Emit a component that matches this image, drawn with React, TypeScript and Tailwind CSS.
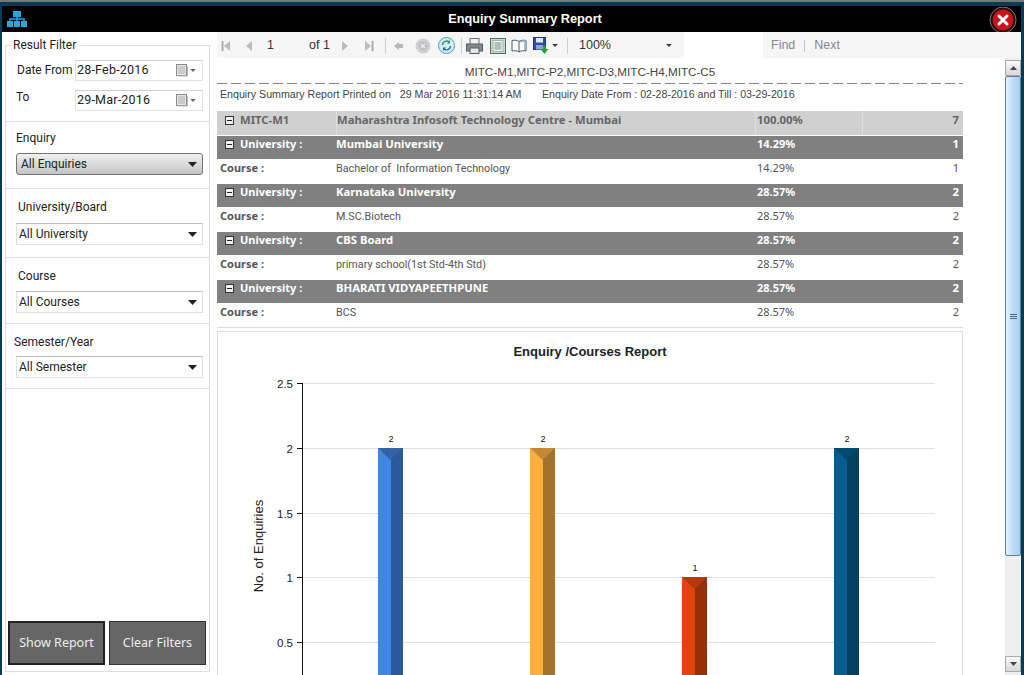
import type { ReactNode } from 'react'

const ui = "font-['Noto_Sans',sans-serif]"
const tight = "font-['Roboto',sans-serif]"
const arial = "font-['Liberation_Sans',sans-serif]"

function Caret({ color = '#222', small }: { color?: string; small?: boolean }) {
  return (
    <svg width={small ? 6 : 9} height={small ? 3 : 5} viewBox="0 0 9 5" className="shrink-0">
      <path d="M0 0h9L4.500 5z" fill={color} />
    </svg>
  )
}

function DateField({ value }: { value: string }) {
  return (
    <div className={`${tight} flex h-[21px] w-[128px] items-center border border-[#e2e2e2] border-t-[#cfcfcf] bg-white pl-[1px] pr-[6px] text-[12.500px] tracking-[0.2px] text-[#222]`}>
      <span className="flex-1">{value}</span>
      <svg width="12" height="13" viewBox="0 0 12 13" className="mr-[2px]">
        <rect x="0.500" y="0.500" width="10" height="11" fill="#e4e4e4" stroke="#8a8a8a" />
        <path d="M2 3h7M2 5h7M2 7h7M2 9h7" stroke="#b0b0b0" />
        <path d="M11.500 2v10H2" fill="none" stroke="#bbb" />
      </svg>
      <Caret color="#666" small />
    </div>
  )
}

function Select({ value, active }: { value: string; active?: boolean }) {
  return (
    <div
      className={
        active
          ? `${tight} flex h-[22px] w-[187px] items-center justify-between rounded-[3px] border border-[#777] bg-gradient-to-b from-[#f0f0f0] to-[#c4c4c4] pl-[4px] pr-[5px] text-[12px] text-[#222]`
          : `${tight} flex h-[22px] w-[187px] items-center justify-between border border-[#e0e0e0] border-t-[#bdbdbd] bg-white pl-[2px] pr-[5px] text-[12px] text-[#222]`
      }
    >
      <span>{value}</span>
      <Caret />
    </div>
  )
}

function FilterBlock(props: { label: string; value: string; active?: boolean; labelClass: string; height: string }) {
  return (
    <div className={`${props.height} border-b border-[#dcdcdc]`}>
      <div className={`${props.labelClass} ${tight} text-[12px] leading-[16px] text-[#222]`}>{props.label}</div>
      <div className="ml-[10px]">
        <Select value={props.value} active={props.active} />
      </div>
    </div>
  )
}

function Sidebar() {
  return (
    <aside className={`${ui} w-[215px] shrink-0 pl-[3px] pr-[2px]`}>
      <fieldset className="mt-[5px] h-[635px] w-[205px] border border-[#dedede] bg-white">
        <legend className={`${tight} ml-[5px] px-[2px] text-[12px] leading-[16px] text-[#222]`}>Result Filter</legend>
        <div className="h-[69px] border-b border-[#dcdcdc] pt-[7px]">
          <div className="flex items-start">
            <span className={`${tight} ml-[11px] w-[58px] whitespace-nowrap pt-[1px] text-[12px] leading-[18px] text-[#222]`}>Date From</span>
            <DateField value="28-Feb-2016" />
          </div>
          <div className="mt-[9px] flex items-start">
            <span className={`${tight} ml-[10px] w-[59px] text-[12px] leading-[14px] text-[#222]`}>To</span>
            <DateField value="29-Mar-2016" />
          </div>
        </div>
        <FilterBlock label="Enquiry" value="All Enquiries" active labelClass="ml-[10px] pt-[8px] pb-[7px]" height="h-[67px]" />
        <FilterBlock label="University/Board" value="All University" labelClass="ml-[12px] pt-[10px] pb-[8px]" height="h-[69px]" />
        <FilterBlock label="Course" value="All Courses" labelClass="ml-[12px] pt-[10px] pb-[7px]" height="h-[66px]" />
        <FilterBlock label="Semester/Year" value="All Semester" labelClass="ml-[8px] pt-[10px] pb-[6px]" height="h-[65px]" />
        <div className="mt-[232px] flex gap-[4px] pl-[2px]">
          <button className="h-[44px] w-[97px] border-2 border-[#222] bg-[#666] text-[12.500px] text-[#eee]">Show Report</button>
          <button className="h-[44px] w-[97px] border border-[#333] bg-[#666] text-[12.500px] text-[#eee]">Clear Filters</button>
        </div>
      </fieldset>
    </aside>
  )
}

function Tool({ w, children }: { w: string; children?: ReactNode }) {
  return <div className={`${w} flex shrink-0 items-center justify-center`}>{children}</div>
}

function Sep() {
  return <div className="h-[16px] w-px shrink-0 bg-[#cfcfcf]" />
}

function Nav({ dir, bar }: { dir: 'l' | 'r'; bar?: boolean }) {
  return (
    <svg width="12" height="12" viewBox="0 0 12 12">
      <path d={dir === 'l' ? 'M9 1v10L3 6z' : 'M3 1v10l6-5z'} fill="#b9bcc0" />
      {bar && <rect x={dir === 'l' ? 0.500 : 9.500} y="1" width="2" height="10" fill="#a8abaf" />}
    </svg>
  )
}

function Toolbar() {
  return (
    <div className={`${arial} flex h-[26px] items-center bg-[#f5f5f5] pl-[2px] pt-[1px] text-[12.500px] text-[#333]`}>
      <Tool w="w-[16px]"><Nav dir="l" bar /></Tool>
      <Tool w="w-[28px]"><Nav dir="l" /></Tool>
      <span className="w-[46px] pl-[4px]">1</span>
      <span className="w-[26px] whitespace-nowrap">of 1</span>
      <Tool w="w-[20px]"><Nav dir="r" /></Tool>
      <Tool w="w-[26px]"><Nav dir="r" bar /></Tool>
      <div className="w-[4px]" />
      <Sep />
      <Tool w="w-[25px]">
        <svg width="10" height="10" viewBox="0 0 10 10"><path d="M5 1v2h4v4H5v2L0 5z" fill="#b4b9be" /></svg>
      </Tool>
      <Tool w="w-[23px]">
        <svg width="16" height="16" viewBox="0 0 16 16">
          <circle cx="8" cy="8" r="7.500" fill="#d0d1d3" />
          <circle cx="8" cy="8" r="4.500" fill="#bdbfc2" />
          <path d="M6 6l4 4m0-4l-4 4" stroke="#eee" strokeWidth="1.400" />
        </svg>
      </Tool>
      <Tool w="w-[24px]">
        <svg width="17" height="17" viewBox="0 0 17 17">
          <circle cx="8.500" cy="8.500" r="8" fill="#d5ecf6" stroke="#4a9cc2" />
          <path d="M4.500 8a4 4 0 0 1 7-2.500" fill="none" stroke="#2f9a4a" strokeWidth="1.500" />
          <path d="M12.500 9a4 4 0 0 1-7 2.500" fill="none" stroke="#2f7fb0" strokeWidth="1.500" />
          <path d="M12 3v3.400H8.800z" fill="#2f9a4a" />
          <path d="M5 14v-3.400h3.200z" fill="#1f6fa0" />
        </svg>
      </Tool>
      <div className="w-[3px]" />
      <Sep />
      <Tool w="w-[25px]">
        <svg width="17" height="16" viewBox="0 0 17 16">
          <rect x="4" y="0.500" width="9" height="6" fill="#f2f2f2" stroke="#6a6f75" />
          <rect x="0.500" y="6" width="16" height="7" fill="#7f8a94" stroke="#555c63" />
          <rect x="4" y="10" width="9" height="5.500" fill="#e8e8e8" stroke="#555c63" />
        </svg>
      </Tool>
      <Tool w="w-[21px]">
        <svg width="16" height="16" viewBox="0 0 16 16">
          <rect x="0.500" y="0.500" width="15" height="15" fill="#c8dcc4" stroke="#4e6f72" />
          <rect x="3" y="2.500" width="10" height="11" fill="#f6f8f2" stroke="#9fb2a8" />
          <path d="M4.500 5h7M4.500 7h7M4.500 9h7M4.500 11h7" stroke="#6f8686" />
        </svg>
      </Tool>
      <Tool w="w-[22px]">
        <svg width="16" height="14" viewBox="0 0 16 14">
          <path d="M8 2.500C6.500 1 3 1 1 1.500v10.500c2-.5 5.500-.5 7 1 1.500-1.500 5-1.500 7-1V1.500C13 1 9.500 1 8 2.500z" fill="#fff" stroke="#45596a" />
          <path d="M8 2.500V13" stroke="#45596a" />
          <path d="M9 2.800c1.500-1 3.500-1 5-.8v9" fill="none" stroke="#8fb2cc" strokeWidth="1.500" />
        </svg>
      </Tool>
      <Tool w="w-[22px]">
        <svg width="17" height="17" viewBox="0 0 17 17">
          <rect x="0.500" y="0.500" width="12" height="12" fill="#2b4fa8" stroke="#1d3676" />
          <rect x="3" y="1" width="7" height="4.500" fill="#e4e9f5" />
          <rect x="3" y="8" width="7" height="4.500" fill="#8fa4d4" />
          <path d="M10 9h3v3h2.500L11.500 17l-4-5H10z" fill="#2f9e3a" />
        </svg>
      </Tool>
      <Tool w="w-[6px]"><Caret color="#333" small /></Tool>
      <div className="w-[9px]" />
      <Sep />
      <span className="ml-[11px] w-[87px]">100%</span>
      <Caret color="#333" small />
      <div className="ml-[12px] mt-[-1px] h-[26px] w-[79px] self-stretch bg-white" />
      <span className="ml-[8px] text-[#888]">Find</span>
      <div className="mx-[9px] h-[12px] w-px bg-[#c8c8c8]" />
      <span className="text-[#888]">Next</span>
    </div>
  )
}

const columns = 'grid grid-cols-[119px_419px_107px_101px] items-center'

function ToggleBox() {
  return (
    <span className="mr-[6px] ml-[8px] flex h-[9px] w-[9px] shrink-0 items-center justify-center border border-[#333] bg-[#eee]">
      <span className="h-px w-[5px] bg-[#222]" />
    </span>
  )
}

function GroupRow(props: { name: string; pct: string; count: string }) {
  return (
    <div className={`${columns} ${ui} h-[23px] bg-[#808080] pb-[6px] text-[11.300px] font-bold text-white`}>
      <div className="flex items-center text-[11px]"><ToggleBox />University :</div>
      <div>{props.name}</div>
      <div className="pl-[2px] text-[11px]">{props.pct}</div>
      <div className="pr-[4px] text-right">{props.count}</div>
    </div>
  )
}

function CourseRow(props: { name: string; pct: string; count: string }) {
  return (
    <div className={`${columns} h-[25px] border-b border-white pb-[5px] text-[#555]`}>
      <div className={`${ui} pl-[3px] text-[11px] font-bold`}>Course :</div>
      <div className={`${tight} whitespace-pre pt-[1px] text-[10.800px]`}>{props.name}</div>
      <div className={`${ui} pl-[2px] text-[11px]`}>{props.pct}</div>
      <div className={`${ui} pr-[4px] text-right text-[11px]`}>{props.count}</div>
    </div>
  )
}

const groups = [
  { uni: 'Mumbai University', course: 'Bachelor of  Information Technology', pct: '14.29%', count: '1' },
  { uni: 'Karnataka University', course: 'M.SC.Biotech', pct: '28.57%', count: '2' },
  { uni: 'CBS Board', course: 'primary school(1st Std-4th Std)', pct: '28.57%', count: '2' },
  { uni: 'BHARATI VIDYAPEETHPUNE', course: 'BCS', pct: '28.57%', count: '2' },
]

function SummaryTable() {
  return (
    <div className="mt-[10px] h-[217px] w-[746px] overflow-hidden border-b border-[#dcdcdc]">
      <div className={`${ui} grid h-[24px] grid-cols-[119px_419px_107px_101px] items-center bg-[#d0d0d0] text-[11.300px] font-bold text-[#666]`}>
        <div className="flex items-center pb-[6px]"><ToggleBox />MITC-M1</div>
        <div className="self-stretch border-l border-[#dedede] pt-[1px]">Maharashtra Infosoft Technology Centre - Mumbai</div>
        <div className="self-stretch border-l border-[#dedede] pt-[1px] pl-[1px]">100.00%</div>
        <div className="self-stretch border-l border-[#dedede] pt-[1px] pr-[4px] text-right">7</div>
      </div>
      <div className="h-px bg-white" />
      {groups.map((g) => (
        <div key={g.uni}>
          <GroupRow name={g.uni} pct={g.pct} count={g.count} />
          <CourseRow name={g.course} pct={g.pct} count={g.count} />
        </div>
      ))}
    </div>
  )
}

const bars = [
  { x: 160, v: 2, a: '#3f86e6', b: '#2a5a9e', c: '#3262a8' },
  { x: 312, v: 2, a: '#fcb03c', b: '#a1732a', c: '#c48a30' },
  { x: 464, v: 1, a: '#e0440b', b: '#992f08', c: '#b23a0c' },
  { x: 616, v: 2, a: '#005e8f', b: '#04405f', c: '#044a70' },
]

function Chart() {
  const yFor = (v: number) => Math.round(375 - v * 129.600)
  return (
    <div className="mt-[3px] h-[400px] w-[746px] border border-[#dcdcdc] bg-white">
      <svg width="744" height="398" viewBox="0 0 744 398" className="block">
        <text x="372" y="24" textAnchor="middle" fontFamily="'Liberation Sans',sans-serif" fontSize="13" fontWeight="700" fill="#222">Enquiry /Courses Report</text>
        <text transform="translate(45 214) rotate(-90)" textAnchor="middle" fontFamily="'Liberation Sans',sans-serif" fontSize="13" fill="#222">No. of Enquiries</text>
        {[0.5, 1, 1.5, 2, 2.5].map((v) => {
          const y = yFor(v) + 0.500
          return (
            <g key={v}>
              <line x1="85" x2="717" y1={y} y2={y} stroke="#dedede" />
              <line x1="79" x2="84" y1={y} y2={y} stroke="#111" />
              <text x="75" y={y + 4} textAnchor="end" fontFamily="'Liberation Sans',sans-serif" fontSize="11.500" fill="#222">{v}</text>
            </g>
          )
        })}
        <line x1="84.500" x2="84.500" y1={yFor(2.5)} y2="398" stroke="#111" />
        {bars.map((b) => {
          const top = yFor(b.v)
          return (
            <g key={b.x}>
              <rect x={b.x} y={top} width="13" height={398 - top} fill={b.a} />
              <rect x={b.x + 13} y={top} width="12" height={398 - top} fill={b.b} />
              <path d={`M${b.x} ${top}h25l-12.500 12z`} fill={b.c} />
              <text x={b.x + 13} y={top - 6} textAnchor="middle" fontFamily="'Liberation Sans',sans-serif" fontSize="9" fill="#111">{b.v}</text>
            </g>
          )
        })}
      </svg>
    </div>
  )
}

function Scrollbar() {
  return (
    <div className="flex w-[16px] shrink-0 flex-col bg-[#efefef]">
      <div className="mt-[2px] flex h-[16px] items-center justify-center border border-[#a9a9a9] bg-gradient-to-b from-[#fafafa] to-[#d6d6d6]">
        <svg width="7" height="4" viewBox="0 0 7 4"><path d="M0 4h7L3.500 0z" fill="#444" /></svg>
      </div>
      <div className="flex h-[480px] items-center justify-center rounded-[2px] border border-[#5d7f95] bg-gradient-to-r from-[#e3f1fb] via-[#bcdcf5] to-[#a6d0f0]">
        <div className="flex flex-col gap-px">
          <div className="h-px w-[7px] bg-[#4d6c82]" />
          <div className="h-px w-[7px] bg-[#4d6c82]" />
          <div className="h-px w-[7px] bg-[#4d6c82]" />
        </div>
      </div>
      <div className="flex-1" />
      <div className="mb-[3px] flex h-[16px] items-center justify-center border border-[#a9a9a9] bg-gradient-to-b from-[#fafafa] to-[#d6d6d6]">
        <svg width="7" height="4" viewBox="0 0 7 4"><path d="M0 0h7L3.500 4z" fill="#444" /></svg>
      </div>
    </div>
  )
}

function Report() {
  return (
    <div className="flex min-h-0 flex-1">
      <div className="min-w-0 flex-1 overflow-hidden">
        <div className={`${arial} w-[746px] pt-[6px] text-center text-[11.700px] leading-[15px] text-[#444]`}>
          MITC-M1,MITC-P2,MITC-D3,MITC-H4,MITC-C5
        </div>
        <div className="mt-[4px] h-px w-[746px] bg-[repeating-linear-gradient(90deg,#888_0_10px,transparent_10px_14px)]" />
        <div className={`${arial} flex w-[746px] pl-[3px] pt-[3px] text-[10.650px] leading-[14px] text-[#444]`}>
          <span className="w-[322px] whitespace-pre">Enquiry Summary Report Printed on   29 Mar 2016 11:31:14 AM</span>
          <span>Enquiry Date From : 02-28-2016 and Till : 03-29-2016</span>
        </div>
        <SummaryTable />
        <Chart />
      </div>
      <Scrollbar />
    </div>
  )
}

export default function App() {
  return (
    <div className="flex h-[675px] w-[1024px] flex-col overflow-hidden border-t-2 border-[#777] bg-[#0b3a55]">
      <header className="mt-[4px] ml-[2px] mr-[3px] flex h-[26px] shrink-0 items-center bg-black">
        <svg width="20" height="16" viewBox="0 0 20 16" className="ml-[5px]">
          <rect x="6" y="0" width="8" height="6" fill="#2aa3df" />
          <path d="M10 6v4M3 10V8h14v2" fill="none" stroke="#2aa3df" strokeWidth="1.500" />
          <rect x="0" y="10" width="6" height="6" fill="#2aa3df" />
          <rect x="7" y="10" width="6" height="6" fill="#2aa3df" />
          <rect x="14" y="10" width="6" height="6" fill="#2aa3df" />
        </svg>
        <div className={`${arial} flex-1 pl-[34px] text-center text-[12.750px] font-bold text-white`}>Enquiry Summary Report</div>
        <svg width="28" height="26" viewBox="0 0 28 26" className="mr-[4px] mb-[-2px]">
          <circle cx="14" cy="13" r="13" fill="#2a0a0a" stroke="#777" strokeWidth="1" />
          <circle cx="14" cy="13" r="10.500" fill="#c4161c" />
          <path d="M10 9l8 8m0-8l-8 8" stroke="#fff" strokeWidth="3" strokeLinecap="round" />
        </svg>
      </header>
      <div className="ml-[2px] mr-[3px] flex min-h-0 flex-1 bg-white">
        <Sidebar />
        <main className="flex min-w-0 flex-1 flex-col">
          <Toolbar />
          <Report />
        </main>
      </div>
    </div>
  )
}
